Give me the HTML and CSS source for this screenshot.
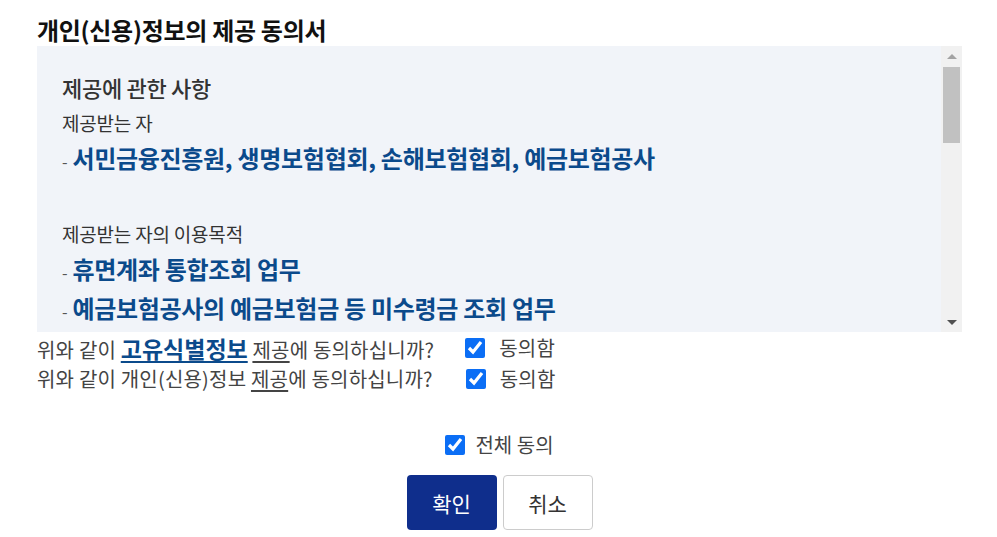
FILE: index.html
```html
<!DOCTYPE html>
<html>
<head>
    <meta charset="UTF-8">
    <meta name="viewport" content="width=device-width, initial-scale=1.0">
    <title>개인(신용)정보의 제공 동의서</title>
    <link rel="stylesheet" href="styles.css">
</head>
<body>
    <div class="agree-wrap">
        <h2 class="agree-title">개인(신용)정보의 제공 동의서</h2>
        <div class="terms-box">
            <div class="terms-content">
                <h3 class="terms-head">제공에 관한 사항</h3>
                <p class="terms-label">제공받는 자</p>
                <p class="terms-item"><span class="dash">-</span> 서민금융진흥원, 생명보험협회, 손해보험협회, 예금보험공사</p>
                <p class="terms-blank">&nbsp;</p>
                <p class="terms-label">제공받는 자의 이용목적</p>
                <p class="terms-item"><span class="dash">-</span> 휴면계좌 통합조회 업무</p>
                <p class="terms-item"><span class="dash">-</span> 예금보험공사의 예금보험금 등 미수령금 조회 업무</p>
                <p class="terms-blank">&nbsp;</p>
                <p class="terms-label">제공하는 개인(신용)정보</p>
                <p class="terms-item"><span class="dash">-</span> 고유식별정보 : 주민등록번호</p>
                <p class="terms-item"><span class="dash">-</span> 개인(신용)정보 : 성명, 휴대폰번호</p>
            </div>
            <!-- scroll track drawn by hand, headless hides the native one -->
            <div class="scrollbar">
                <div class="sb-btn"><span class="arrow-up"></span></div>
                <div class="sb-track"><div class="sb-thumb"></div></div>
                <div class="sb-btn"><span class="arrow-down"></span></div>
            </div>
        </div>

        <div class="agree-row">
            <span class="agree-q">위와 같이 <u class="strong">고유식별정보</u> <u>제공</u>에 동의하십니까?</span>
            <label class="agree-check"><input type="checkbox" checked> 동의함</label>
        </div>
        <div class="agree-row">
            <span class="agree-q">위와 같이 개인(신용)정보 <u>제공</u>에 동의하십니까?</span>
            <label class="agree-check second"><input type="checkbox" checked> 동의함</label>
        </div>

        <div class="agree-all">
            <label><input type="checkbox" checked> 전체 동의</label>
        </div>

        <div class="button-container">
            <button class="btn-ok">확인</button>
            <button class="btn-cancel">취소</button>
        </div>
    </div>
</body>
</html>
```

FILE: styles.css
```css
body {
    margin: 0;
    background-color: #fff;
    color: #333;
    font-family: "Noto Sans CJK KR", "Noto Sans", sans-serif;
}
.agree-wrap {
    margin: 0 35px 0 37px;
    padding-top: 13px;
}
.agree-title {
    margin: 0;
    font-size: 24px;
    font-weight: 700;
    line-height: 33px;
    color: #111;
    letter-spacing: -0.3px;
}
.terms-box {
    display: flex;
    height: 286px;
    background-color: #f1f4f9;
}
.terms-content {
    flex: 1;
    overflow: hidden;
    padding: 24px 25px 0;
}
.scrollbar {
    display: flex;
    flex-direction: column;
    width: 21px;
    background-color: #f1f1f1;
}
.sb-btn {
    display: flex;
    align-items: center;
    justify-content: center;
    height: 20px;
}
.arrow-up {
    border-left: 5px solid transparent;
    border-right: 5px solid transparent;
    border-bottom: 5px solid #a3a3a3;
}
.arrow-down {
    border-left: 5px solid transparent;
    border-right: 5px solid transparent;
    border-top: 5px solid #505050;
}
.sb-track {
    flex: 1;
    padding: 1px 2px 0;
}
.sb-thumb {
    height: 76px;
    background-color: #c1c1c1;
}
.terms-head {
    margin: 0;
    font-size: 22px;
    font-weight: 500;
    line-height: 35px;
    color: #333;
    letter-spacing: -0.3px;
}
.terms-label {
    margin: 0;
    font-size: 19px;
    line-height: 35px;
    color: #333;
    letter-spacing: -0.2px;
}
.terms-item {
    margin: 0;
    font-size: 24px;
    font-weight: 700;
    line-height: 35px;
    color: #0b4a8b;
    letter-spacing: -0.3px;
    white-space: nowrap;
}
.terms-item .dash {
    font-size: 16px;
    font-weight: 400;
    color: #555;
}
.terms-blank {
    margin: 0;
    height: 37px;
}
.agree-row {
    display: flex;
    align-items: center;
    height: 31px;
    font-size: 20px;
    color: #444;
    letter-spacing: 0.2px;
}
.agree-q u {
    text-underline-offset: 3px;
}
.agree-q .strong {
    font-size: 23px;
    font-weight: 700;
    color: #0b4a8b;
    letter-spacing: 0;
    text-decoration-thickness: 2px;
}
.agree-check {
    display: flex;
    align-items: center;
    margin-left: 31px;
}
.agree-check.second {
    margin-left: 33px;
}
input[type="checkbox"] {
    width: 20px;
    height: 20px;
    margin: 0 14px 0 0;
    accent-color: #0b6ef5;
}
.agree-all {
    display: flex;
    justify-content: center;
    margin-top: 36px;
    font-size: 20px;
    color: #444;
}
.agree-all label {
    display: flex;
    align-items: center;
}
.agree-all input[type="checkbox"] {
    margin-right: 10px;
}
.button-container {
    display: flex;
    justify-content: center;
    gap: 6px;
    margin-top: 16px;
}
.button-container button {
    width: 90px;
    height: 55px;
    font-family: inherit;
    font-size: 21px;
    border-radius: 4px;
    cursor: pointer;
}
.btn-ok {
    background-color: #0f2e8c;
    color: #fff;
    border: none;
}
.btn-cancel {
    background-color: #fff;
    color: #333;
    border: 1px solid #ccc;
}
```
